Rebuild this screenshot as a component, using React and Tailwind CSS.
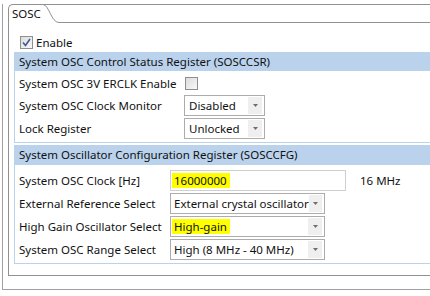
import React from 'react';

const Arrow = () => (
  <div className="ml-auto mr-[2px] my-[1px] w-[14px] bg-[#efefef] flex items-center justify-center">
    <svg width="5" height="3" viewBox="0 0 5 3">
      <path d="M0 0h5L2.5 3z" fill="#6e6e6e" />
    </svg>
  </div>
);

const Combo = ({ width, pad, children }) => (
  <div className={`flex items-stretch h-[21px] border border-[#acacac] bg-white ${width}`}>
    <div className={`flex items-center whitespace-nowrap ${pad}`}>{children}</div>
    <Arrow />
  </div>
);

const Mark = ({ children }) => (
  <span className="bg-[#ffff00] h-[15px] pl-[2px] pr-[3px] flex items-center">{children}</span>
);

const Checkbox = ({ checked }) => (
  <div className="w-[13px] h-[13px] border border-[#8e8f8f] bg-gradient-to-br from-[#dcdcdc] to-[#f9f9f9] flex items-center justify-center">
    {checked && (
      <svg width="9" height="9" viewBox="0 0 9 9">
        <path d="M1 4.5 L3.5 7.5 L8 1" fill="none" stroke="#3d5a96" strokeWidth="1.6" />
      </svg>
    )}
  </div>
);

const Row = ({ label, labelW, children }) => (
  <div className="flex items-center h-[21px]">
    <div className={`shrink-0 ${labelW}`}>{label}</div>
    {children}
  </div>
);

export default function App() {
  return (
    <div
      className="w-[430px] h-[296px] bg-white overflow-hidden pl-[2px] text-[11.5px] text-[#111]"
      style={{ fontFamily: '"Noto Sans", "Open Sans", sans-serif' }}
    >
      <div className="h-[286px] border-l border-b border-[#a0a0a0] pl-[5px]">
        <div className="mt-[4px] h-[272px] border-l border-t border-b border-[#919191] rounded-tl-[5px]">
          {/* tab header */}
          <div className="flex h-[18px]">
            <div className="w-[34px] pl-[3px] flex items-center">SOSC</div>
            <svg width="16" height="18" className="overflow-visible shrink-0">
              <path d="M0 -0.5 C6 -0.5 8 17.5 16 17.5" fill="none" stroke="#919191" />
            </svg>
            <div className="flex-1 border-b border-[#919191]" />
          </div>

          <div className="pl-[5px]">
            <div className="mt-[13px] h-[13px] flex items-center ml-[6px]">
              <Checkbox checked />
              <span className="ml-[3px]">Enable</span>
            </div>

            {/* section 1 */}
            <div className="mt-[3px]">
              <div className="h-[19px] bg-[#bad2ec] flex items-center pl-[5px]">
                System OSC Control Status Register (SOSCCSR)
              </div>
              <div className="border-l border-b border-[#bad2ec] pl-[4px] pt-[2px] pb-[3px] flex flex-col">
                <Row label="System OSC 3V ERCLK Enable" labelW="w-[166px]">
                  <Checkbox />
                </Row>
                <div className="mt-[1px]">
                  <Row label="System OSC Clock Monitor" labelW="w-[165px]">
                    <Combo width="w-[81px]" pad="pl-[4px]">Disabled</Combo>
                  </Row>
                </div>
                <div className="mt-[2px]">
                  <Row label="Lock Register" labelW="w-[165px]">
                    <Combo width="w-[81px]" pad="pl-[4px]">Unlocked</Combo>
                  </Row>
                </div>
              </div>
            </div>

            {/* section 2 */}
            <div className="mt-[2px]">
              <div className="h-[20px] bg-[#bad2ec] flex items-center pl-[5px]">
                System Oscillator Configuration Register (SOSCCFG)
              </div>
              <div className="border-l border-b border-[#bad2ec] pl-[4px] pt-[5px] pb-[3px] flex flex-col gap-[2px]">
                <Row label="System OSC Clock [Hz]" labelW="w-[151px]">
                  <div className="w-[176px] h-[21px] border border-[#cfcfcf] flex items-center pl-[1px]">
                    <Mark>16000000</Mark>
                  </div>
                  <span className="ml-[14px]">16 MHz</span>
                </Row>
                <Row label="External Reference Select" labelW="w-[151px]">
                  <Combo width="w-[155px]" pad="pl-[3px]">External crystal oscillator</Combo>
                </Row>
                <Row label="High Gain Oscillator Select" labelW="w-[151px]">
                  <Combo width="w-[155px]" pad="pl-[1px]">
                    <Mark>High-gain</Mark>
                  </Combo>
                </Row>
                <Row label="System OSC Range Select" labelW="w-[151px]">
                  <Combo width="w-[155px]" pad="pl-[3px]">High (8 MHz - 40 MHz)</Combo>
                </Row>
              </div>
            </div>
          </div>
        </div>
      </div>
    </div>
  );
}
